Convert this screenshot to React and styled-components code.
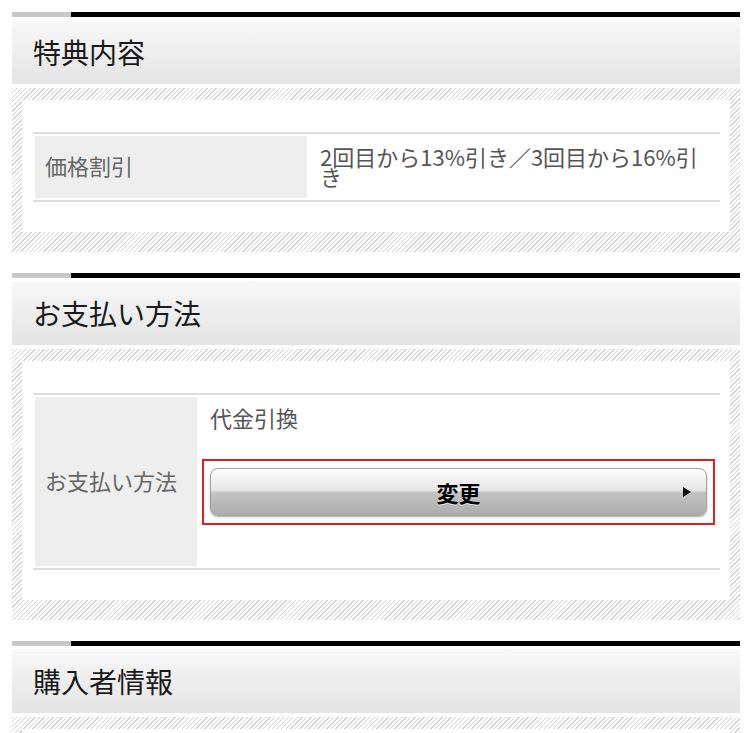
import React from "react";
import styled, { createGlobalStyle } from "styled-components";

const GlobalStyle = createGlobalStyle`
  body {
    margin: 0;
    background: #fff;
    font-family: "Noto Sans CJK JP", "Noto Sans", sans-serif;
  }
`;

const Page = styled.div`
  padding: 12px 10px 0 12px;
`;

const Section = styled.section`
  margin-bottom: 21px;
`;

const TopBar = styled.div`
  display: flex;
  height: 5px;
`;

const BarGray = styled.div`
  width: 59px;
  background: #c8c8c8;
`;

const BarBlack = styled.div`
  flex: 1;
  background: #000;
`;

const Header = styled.h2`
  margin: 2px 0 0;
  height: 65px;
  display: flex;
  align-items: center;
  padding-left: 21px;
  background: linear-gradient(#f8f8f8, #e4e4e4);
  border-top: 1px solid #fff;
  box-sizing: border-box;
  font-size: 28px;
  font-weight: normal;
  color: #1a1a1a;
`;

const Panel = styled.div`
  margin-top: 4px;
  padding: 12px 10px 20px 10px;
  background: repeating-linear-gradient(
    135deg,
    #d2d2d2 0,
    #d2d2d2 1px,
    #fff 1px,
    #fff 3.2px
  );
`;

const PanelInner = styled.div`
  background: #fff;
  padding: 32px 10px 30px 11px;
  min-height: ${(p) => p.minH || 0}px;
`;

const Table = styled.table`
  width: 100%;
  border-collapse: separate;
  border-spacing: 2px;
  border-top: 2px solid #ddd;
  border-bottom: 2px solid #ddd;
`;

const LabelCell = styled.th`
  box-sizing: border-box;
  width: ${(p) => p.w}px;
  background: #eee;
  padding: 0 10px 4px;
  text-align: left;
  vertical-align: middle;
  font-weight: normal;
  font-size: 22px;
  line-height: 20px;
  color: #666;
`;

const ValueCell = styled.td`
  padding: 10px 11px 12px;
  vertical-align: top;
  font-size: 22px;
  line-height: 20px;
  color: #555;
`;

const RedFrame = styled.div`
  border: 2px solid #e41d1d;
  padding: 7px 6px;
  margin: 32px -8px 29px -8px;
`;

const ChangeButton = styled.button`
  display: grid;
  grid-template-columns: 1fr auto 1fr;
  align-items: center;
  width: 100%;
  height: 48px;
  padding: 0 15px;
  border: 1px solid #a3a3a3;
  border-radius: 8px;
  background: linear-gradient(
    #fdfdfd 0%,
    #e6e6e6 46%,
    #c2c2c2 52%,
    #adadad 100%
  );
  box-shadow: 0 1px 2px rgba(0, 0, 0, 0.35);
  font-family: inherit;
  font-size: 22px;
  font-weight: bold;
  color: #000;
  text-shadow: 0 1px 0 rgba(255, 255, 255, 0.6);
  cursor: pointer;
`;

const ButtonText = styled.span`
  grid-column: 2;
`;

const Arrow = styled.span`
  grid-column: 3;
  justify-self: end;
  width: 0;
  height: 0;
  border-top: 5px solid transparent;
  border-bottom: 5px solid transparent;
  border-left: 8px solid #111;
`;

const App = () => {
  return (
    <>
      <GlobalStyle />
      <Page>
        <Section>
          <TopBar>
            <BarGray />
            <BarBlack />
          </TopBar>
          <Header>特典内容</Header>
          <Panel>
            <PanelInner>
              <Table>
                <tbody>
                  <tr>
                    <LabelCell w={272}>価格割引</LabelCell>
                    <ValueCell>2回目から13%引き／3回目から16%引き</ValueCell>
                  </tr>
                </tbody>
              </Table>
            </PanelInner>
          </Panel>
        </Section>

        <Section>
          <TopBar>
            <BarGray />
            <BarBlack />
          </TopBar>
          <Header>お支払い方法</Header>
          <Panel>
            <PanelInner>
              <Table>
                <tbody>
                  <tr>
                    <LabelCell w={162}>お支払い方法</LabelCell>
                    <ValueCell>
                      代金引換
                      <RedFrame>
                        <ChangeButton type="button">
                          <ButtonText>変更</ButtonText>
                          <Arrow />
                        </ChangeButton>
                      </RedFrame>
                    </ValueCell>
                  </tr>
                </tbody>
              </Table>
            </PanelInner>
          </Panel>
        </Section>

        <Section>
          <TopBar>
            <BarGray />
            <BarBlack />
          </TopBar>
          <Header>購入者情報</Header>
          <Panel>
            <PanelInner minH={120} />
          </Panel>
        </Section>
      </Page>
    </>
  );
};

export default App;
